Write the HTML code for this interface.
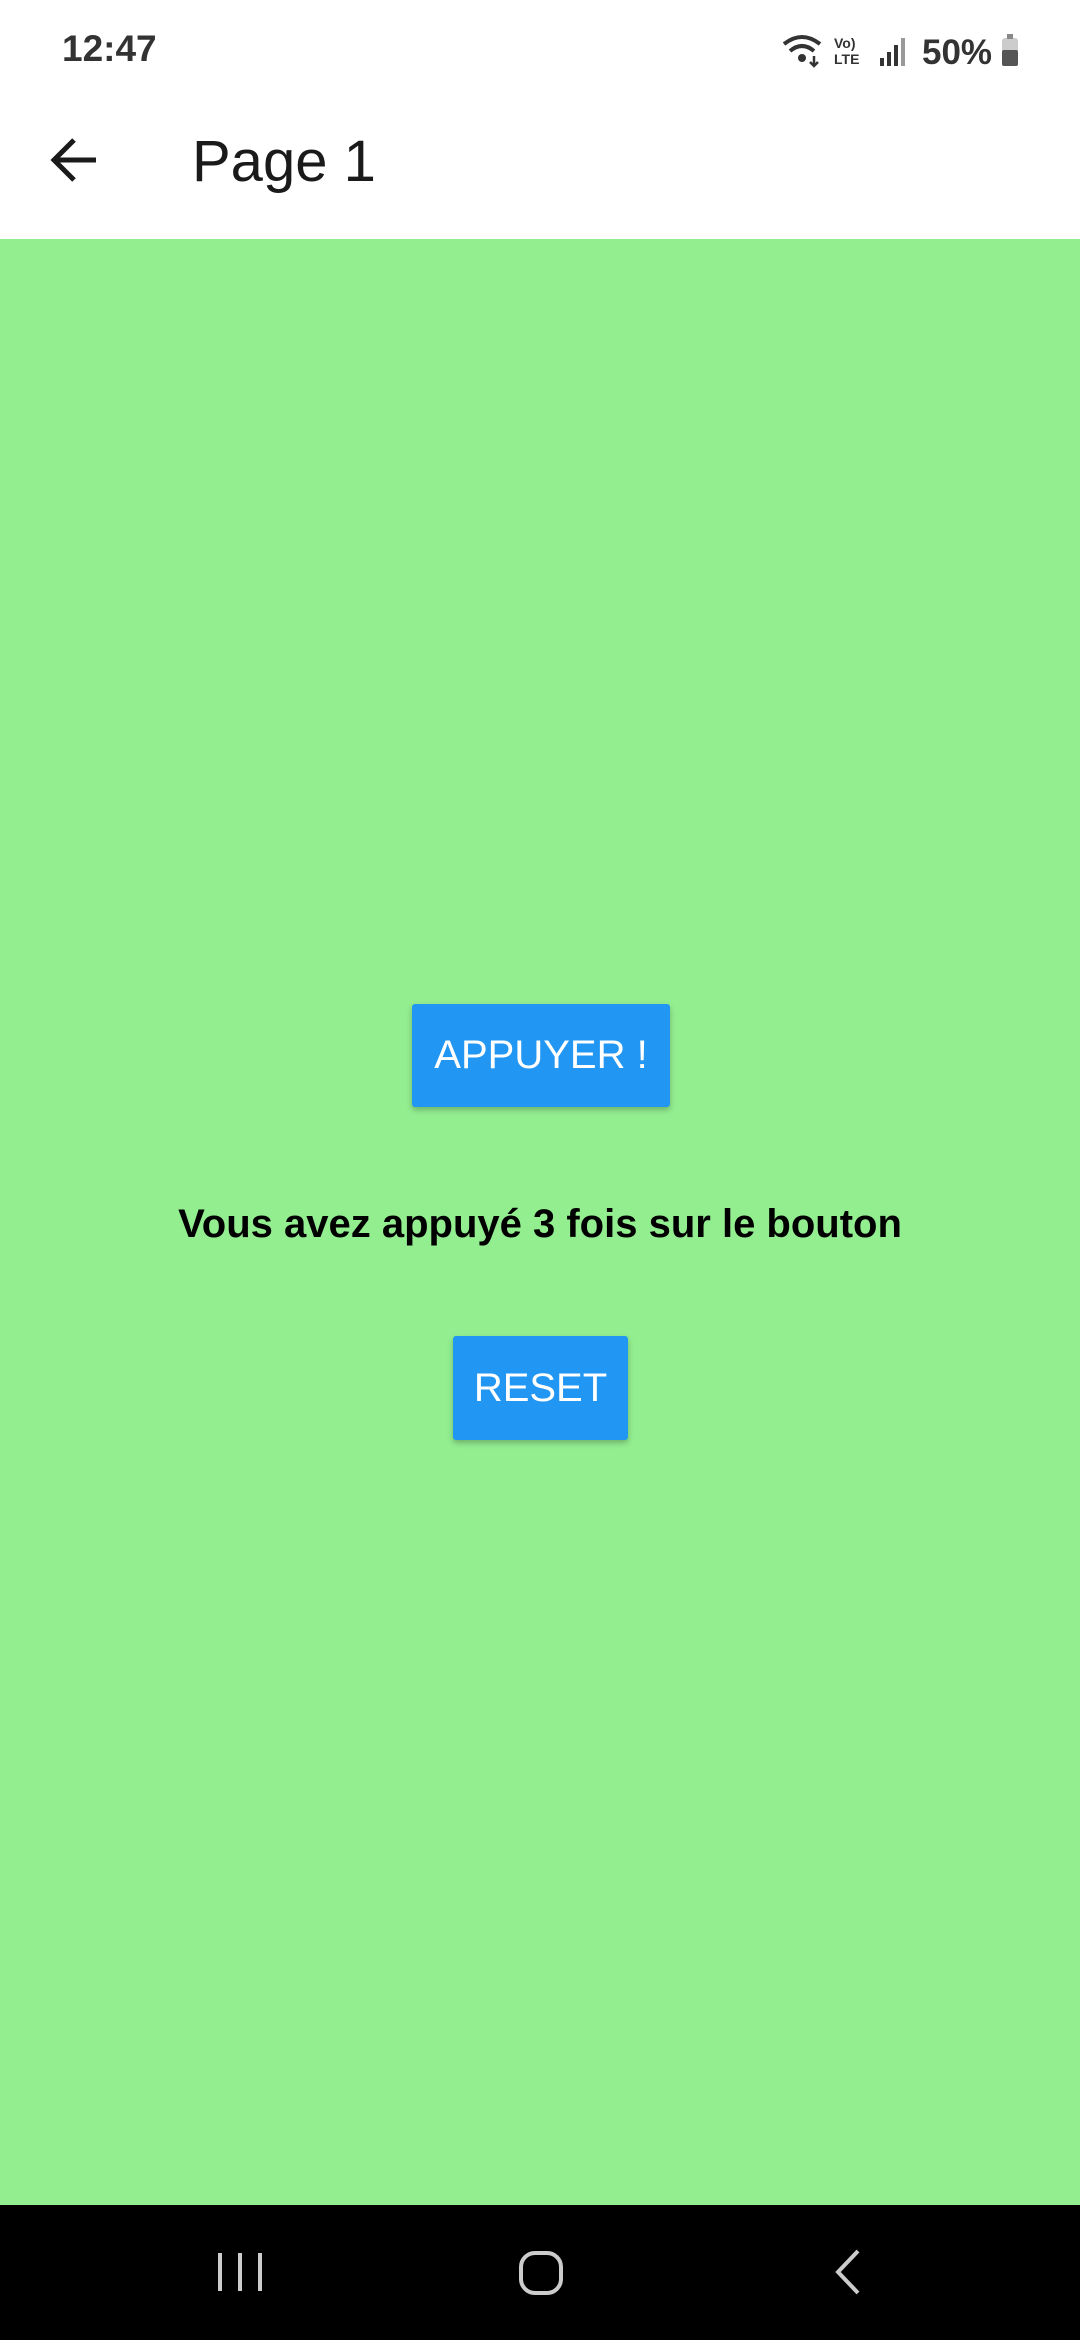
<!DOCTYPE html>
<html><head><meta charset="utf-8"><style>
html,body{margin:0;padding:0;width:1080px;height:2340px;overflow:hidden;font-family:"Liberation Sans",sans-serif;background:#fff}
.sb{position:absolute;top:0;left:0;width:1080px;height:100px;}
.time{position:absolute;left:62px;top:28px;font-size:37px;color:#333;font-weight:bold}
.hdr{position:absolute;top:100px;left:0;width:1080px;height:139px;background:#fff}
.title{position:absolute;left:192px;top:128px;font-size:58px;color:#1a1a1a}
.green{position:absolute;top:239px;left:0;width:1080px;height:1966px;background:#93ee90}
.btn{position:absolute;background:#2196f3;color:#fff;font-size:40px;display:flex;align-items:center;justify-content:center;border-radius:3px;box-shadow:0 3px 6px rgba(0,0,0,.25)}
.msg{position:absolute;left:0;width:1080px;top:1202px;text-align:center;font-size:40px;color:#000;font-weight:bold}
.nav{position:absolute;top:2205px;left:0;width:1080px;height:135px;background:#000}
</style></head><body>
<div class="sb">
<div class="time">12:47</div>
<svg style="position:absolute;left:780px;top:30px" width="240" height="40" viewBox="0 0 240 40">
<path d="M4 14 Q22 0 40 14" stroke="#333" stroke-width="4" fill="none"/>
<path d="M10 21 Q22 11 34 21" stroke="#333" stroke-width="4" fill="none"/>
<circle cx="22" cy="28" r="4" fill="#333"/>
<path d="M34 26v10M30 32l4 4 4-4" stroke="#333" stroke-width="2.5" fill="none"/>
<text x="54" y="18" font-size="14" font-weight="bold" fill="#333" font-family="Liberation Sans">Vo)</text>
<text x="54" y="34" font-size="14" font-weight="bold" fill="#333" font-family="Liberation Sans">LTE</text>
<rect x="100" y="28" width="4" height="8" fill="#333"/><rect x="107" y="22" width="4" height="14" fill="#333"/><rect x="114" y="15" width="4" height="21" fill="#333"/><rect x="121" y="8" width="4" height="28" fill="#999"/>
<text x="142" y="34" font-size="35" font-weight="bold" fill="#333" font-family="Liberation Sans">50%</text>
<rect x="222" y="8" width="16" height="28" rx="3" fill="#ccc"/><rect x="227" y="4" width="6" height="5" fill="#888"/><rect x="222" y="20" width="16" height="16" rx="2" fill="#555"/>
</svg>
</div>
<div class="hdr"></div>
<svg style="position:absolute;left:48px;top:136px" width="52" height="48" viewBox="0 0 52 48"><path d="M48 24H6M26 4L6 24l20 20" stroke="#1a1a1a" stroke-width="5" fill="none"/></svg>
<div class="title">Page 1</div>
<div class="green"></div>
<div class="btn" style="left:412px;top:1004px;width:258px;height:103px">APPUYER !</div>
<div class="msg">Vous avez appuyé 3 fois sur le bouton</div>
<div class="btn" style="left:453px;top:1336px;width:175px;height:104px">RESET</div>
<div class="nav">
<svg style="position:absolute;left:0;top:0" width="1080" height="135" viewBox="0 0 1080 135">
<path d="M220 48v38M240 48v38M260 48v38" stroke="#ccc" stroke-width="4"/>
<rect x="521" y="48" width="40" height="40" rx="14" stroke="#ccc" stroke-width="4" fill="none"/>
<path d="M858 46l-20 21 20 21" stroke="#ccc" stroke-width="4" fill="none"/>
</svg></div>
</body></html>
